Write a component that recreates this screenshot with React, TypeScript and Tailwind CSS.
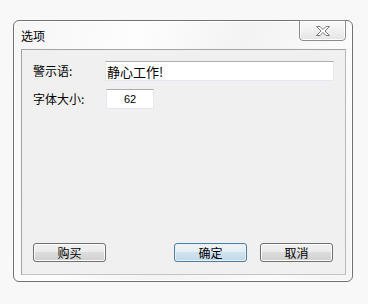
import React from "react";

// ─── Win7 style button ────────────────────────────────────────────────────────

function DlgButton({ label, primary }: { label: string; primary?: boolean }) {
  return (
    <button
      className={
        primary
          ? "w-[73px] h-[19px] rounded-[3px] border border-[#4f7fa0] bg-[linear-gradient(to_bottom,#eef5fa_0%,#e2edf5_45%,#d2e2ee_50%,#c2d7e6_100%)] shadow-[inset_0_0_0_1px_#e6f2fa] text-[12px] leading-[17px] text-black"
          : "w-[73px] h-[19px] rounded-[3px] border border-[#707070] bg-[linear-gradient(to_bottom,#f2f2f2_0%,#ebebeb_45%,#dddddd_50%,#cfcfcf_100%)] shadow-[inset_0_0_0_1px_#fcfcfc] text-[12px] leading-[17px] text-black"
      }
    >
      {label}
    </button>
  );
}

// ─── Close glyph ──────────────────────────────────────────────────────────────

function CloseGlyph() {
  return (
    <svg width="16" height="12" viewBox="0 0 16 12">
      <path
        d="M1.5 1.5 H5 L8 4.5 L11 1.5 H14.5 L10 6 L14.5 10.5 H11 L8 7.5 L5 10.5 H1.5 L6 6 Z"
        fill="#ffffff"
        stroke="#7a7a7a"
        strokeWidth="1"
        strokeLinejoin="round"
      />
    </svg>
  );
}

// ─── Dialog ───────────────────────────────────────────────────────────────────

export default function App() {
  return (
    <div
      className="w-[368px] h-[304px] bg-[#f8f8f8] pt-[20px] pl-[13px] overflow-hidden"
      style={{ fontFamily: '"Noto Sans CJK SC", "Liberation Sans", sans-serif' }}
    >
      <div className="relative w-[340px] h-[262px] rounded-[6px] border border-[#727272] bg-[linear-gradient(110deg,#f6f6f6_0%,#fdfdfd_30%,#f3f3f3_55%,#fbfbfb_80%,#f4f4f4_100%)] shadow-[inset_0_0_0_1px_#ffffff] flex flex-col pl-[7px] pr-[6px] pb-[6px]">
        {/* Title bar */}
        <div className="h-[28px] shrink-0 flex items-center">
          <span className="text-[12px] text-black leading-none pt-[1px]">选项</span>
        </div>

        {/* Close button */}
        <div className="absolute top-[-1px] right-[6px] w-[47px] h-[21px] rounded-b-[4px] border border-[#8b8b8b] bg-[linear-gradient(to_bottom,#fafafa_0%,#f0f0f0_50%,#e4e4e4_100%)] shadow-[inset_0_0_0_1px_#ffffff] flex items-center justify-center">
          <CloseGlyph />
        </div>

        {/* Client area */}
        <div className="flex-1 border border-[#a3a3a3] border-r-[#b8b8b8] border-b-[#c4c4c4] bg-[#f0f0f0] flex flex-col pt-[11px] pl-[11px] pr-[11px] pb-[12px]">
          <div className="flex items-center h-[20px]">
            <span className="w-[72px] shrink-0 text-[12px] text-black">警示语:</span>
            <div className="w-[229px] h-[20px] shrink-0 bg-white border border-[#e3e9ef] border-t-[#abadb3] flex items-center pl-[1px]">
              <span className="text-[13px] text-black leading-none">静心工作!</span>
            </div>
          </div>

          <div className="flex items-center h-[20px] mt-[8px]">
            <span className="w-[73px] shrink-0 text-[12px] text-black">字体大小:</span>
            <div className="w-[48px] h-[20px] shrink-0 bg-white border border-[#e3e9ef] border-t-[#abadb3] flex items-center justify-center">
              <span className="text-[11px] text-black leading-none" style={{ fontFamily: '"Liberation Sans", sans-serif' }}>
                62
              </span>
            </div>
          </div>

          <div className="flex-1" />

          <div className="flex items-center pr-[1px]">
            <DlgButton label="购买" />
            <div className="flex-1" />
            <DlgButton label="确定" primary />
            <div className="w-[13px]" />
            <DlgButton label="取消" />
          </div>
        </div>
      </div>
    </div>
  );
}
